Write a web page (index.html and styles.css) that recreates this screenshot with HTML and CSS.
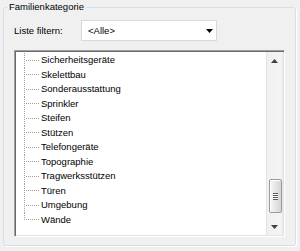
FILE: index.html
```html
<!DOCTYPE html>
<html lang="de">
<head>
  <meta charset="UTF-8" />
  <title>Familienkategorie</title>
  <link rel="stylesheet" href="styles.css">
</head>
<body>

  <fieldset class="group">
    <legend>Familienkategorie</legend>

    <div class="filter-row">
      <label for="filter">Liste filtern:</label>
      <div class="combo" id="filter">
        <span>&lt;Alle&gt;</span>
        <svg class="combo-arrow" width="7" height="4" viewBox="0 0 7 4"><polygon points="0,0 7,0 3.5,4" fill="#000"/></svg>
      </div>
    </div>

    <div class="listbox">
      <ul class="tree">
        <li><span class="twig"></span>Sicherheitsgeräte</li>
        <li><span class="twig"></span>Skelettbau</li>
        <li><span class="twig"></span>Sonderausstattung</li>
        <li><span class="twig"></span>Sprinkler</li>
        <li><span class="twig"></span>Steifen</li>
        <li><span class="twig"></span>Stützen</li>
        <li><span class="twig"></span>Telefongeräte</li>
        <li><span class="twig"></span>Topographie</li>
        <li><span class="twig"></span>Tragwerksstützen</li>
        <li><span class="twig"></span>Türen</li>
        <li><span class="twig"></span>Umgebung</li>
        <li class="last"><span class="twig"></span>Wände</li>
      </ul>

      <div class="scrollbar">
        <div class="sb-btn">
          <svg width="7" height="4" viewBox="0 0 7 4"><polygon points="3.5,0 7,4 0,4" fill="#404040"/></svg>
        </div>
        <div class="sb-track">
          <!-- thumb offset = scroll position -->
          <div class="sb-thumb" style="margin-top:110px"><span class="grip"></span></div>
        </div>
        <div class="sb-btn">
          <svg width="7" height="4" viewBox="0 0 7 4"><polygon points="0,0 7,0 3.5,4" fill="#404040"/></svg>
        </div>
      </div>
    </div>
  </fieldset>

</body>
</html>
```

FILE: styles.css
```css
html, body {
  margin: 0;
  padding: 0;
}
*, *::before, *::after {
  box-sizing: border-box;
}
body {
  font-family: 'Liberation Sans', Arial, sans-serif;
  font-size: 9.5px;
  color: #000;
  background: #f0f0f0;
  width: 300px;
  height: 251px;
  padding: 0 4px 5px 3px;
}

.group {
  margin: 0;
  padding: 0 10px 8px 10px;
  border: 1px solid #d5dfe5;
  border-radius: 3px;
  box-shadow: 1px 1px 0 #fff;
  min-inline-size: 0;
}

.group legend {
  margin-left: -7px;
  padding: 0 2px;
  line-height: 14px;
}

.filter-row {
  margin-top: 6px;
  height: 21px;
  display: grid;
  grid-template-columns: 67px 136px;
  align-items: center;
}

.combo {
  height: 21px;
  background: #fff;
  border: 1px solid #d9d9d9;
  display: flex;
  align-items: center;
  justify-content: space-between;
  padding: 0 3px 0 6px;
}

.listbox {
  margin-top: 9px;
  height: 187px;
  display: flex;
  background: #fff;
  border: 1px solid;
  border-color: #a0a0a0 #fff #fff #a0a0a0;
  box-shadow: inset 1px 1px 0 #696969, inset -1px -1px 0 #e3e3e3;
  padding: 1px;
}

.tree {
  flex: 1;
  list-style: none;
  margin: 0;
  padding: 1px 0 0 8px;
  line-height: 14.5px;
  overflow: hidden;
}

.tree li {
  display: flex;
  height: 14.5px;
  white-space: nowrap;
}

.twig {
  width: 15px;
  margin-right: 2px;
  background:
    repeating-linear-gradient(to bottom, #a0a0a0 0 1px, transparent 1px 2px) no-repeat 0 0 / 1px 100%,
    repeating-linear-gradient(to right, #a0a0a0 0 1px, transparent 1px 2px) no-repeat 2px 50% / 13px 1px;
}

.tree li.last .twig {
  background:
    repeating-linear-gradient(to bottom, #a0a0a0 0 1px, transparent 1px 2px) no-repeat 0 0 / 1px 50%,
    repeating-linear-gradient(to right, #a0a0a0 0 1px, transparent 1px 2px) no-repeat 2px 50% / 13px 1px;
}

.scrollbar {
  width: 17px;
  display: flex;
  flex-direction: column;
  background: linear-gradient(to right, #e3e3e3 0 1px, #f0f0f0 1px, #f4f4f4 16px, #e8e8e8 16px);
}

.sb-btn {
  height: 17px;
  display: flex;
  align-items: center;
  justify-content: center;
}

.sb-track {
  flex: 1;
  display: flex;
  flex-direction: column;
  align-items: center;
}

.sb-thumb {
  width: 13px;
  height: 34px;
  margin-left: 1px;
  border: 1px solid #9a9a9a;
  border-radius: 2px;
  background: linear-gradient(to right, #f6f6f6, #e6e6e6 50%, #d4d4d4);
  box-shadow: inset 1px 1px 0 #fff;
  display: flex;
  align-items: center;
  justify-content: center;
}

.grip {
  width: 5px;
  height: 7px;
  background: repeating-linear-gradient(to bottom, #5a5a5a 0 1px, #fff 1px 2px);
}
```
